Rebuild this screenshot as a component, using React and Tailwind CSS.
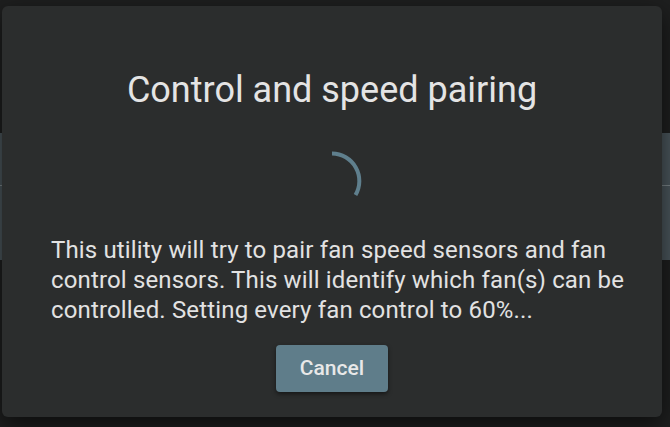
export default function App() {
  return (
    <div
      className="relative h-[427px] w-[670px] overflow-hidden bg-[#1e1f1f]"
      style={{ fontFamily: 'Roboto, "Liberation Sans", sans-serif' }}
    >
      {/* page content behind the dialog */}
      <div className="pt-[133px]">
        <div className="flex h-[127px] flex-col bg-[#4a555b]">
          <div className="h-[53px] border-b border-[#7a8488]" />
        </div>
      </div>

      {/* modal */}
      <div className="absolute left-[2px] top-[6px] flex h-[411px] w-[660px] flex-col items-center rounded-md bg-[#2b2d2d] px-[48px] pt-[62px] shadow-[0_8px_24px_rgba(0,0,0,0.6)]">
        <h1 className="text-[36px] leading-[44px] font-normal text-[#e4e4e4]">
          Control and speed pairing
        </h1>

        <svg className="mt-[39px] h-[60px] w-[60px]" viewBox="0 0 60 60">
          <path
            d="M 30 2.5 A 27.5 27.5 0 0 1 53.5 44"
            fill="none"
            stroke="#5f7f8d"
            strokeWidth="4"
          />
        </svg>

        <p className="mt-[24px] -mr-[20px] self-stretch pl-[1px] text-[24px] leading-[30px] tracking-[0.15px] text-[#e2e2e2]">
          This utility will try to pair fan speed sensors and fan control sensors. This will identify which fan(s) can be controlled. Setting every fan control to 60%...
        </p>

        <button className="mt-[20px] h-[47px] w-[112px] rounded bg-[#5f7d8a] text-[21px] font-medium text-[#e8e8e8] shadow-[0_2px_4px_rgba(0,0,0,0.5)]">
          Cancel
        </button>
      </div>
    </div>
  );
}
